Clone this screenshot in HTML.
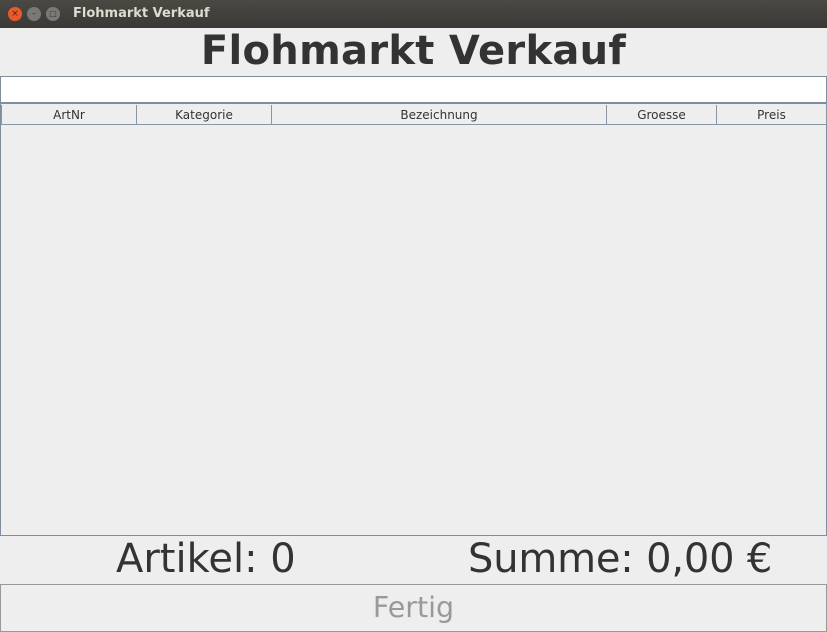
<!DOCTYPE html>
<html><head><meta charset="utf-8"><style>
*{margin:0;padding:0;box-sizing:border-box}
body{width:827px;height:632px;background:#eeeeee;font-family:"DejaVu Sans","Liberation Sans",sans-serif;position:relative;overflow:hidden;color:#333}
.tb{position:absolute;left:0;top:0;width:827px;height:28px;background:linear-gradient(#4a4944,#3a3935);}
.btn{position:absolute;top:7px;width:14px;height:14px;border-radius:50%;font-size:9px;line-height:14px;text-align:center;color:#3a3935}
.tt{position:absolute;left:73px;top:6px;color:#dfdbd2;font-weight:bold;font-size:13px}
.h1{position:absolute;left:0;width:827px;top:28px;text-align:center;font-weight:bold;font-size:40px;letter-spacing:0.3px;color:#333}
.tf{position:absolute;left:0;top:76px;width:827px;height:27px;background:#fff;border:1px solid #7f8e9e}
.tbl{position:absolute;left:0;top:103px;width:827px;height:433px;border:1px solid #7f8e9e;background:#eee}
.hd{position:absolute;top:1px;height:20px;border:1px solid #8a96a3;border-top:0;text-align:center;font-size:12px;line-height:21px;background:#eee;color:#333}
.big{position:absolute;top:536px;font-size:40px;color:#333}
.fb{position:absolute;left:0;top:584px;width:827px;height:48px;border:1px solid #999;text-align:center;font-size:28.5px;color:#999;line-height:46px}
</style></head><body>
<div class="tb">
<div class="btn" style="left:8px;background:#e9592b;color:#5a1d0c">×</div>
<div class="btn" style="left:27px;background:#7a7975">–</div>
<div class="btn" style="left:46px;background:#7a7975;font-size:8px">□</div>
<div class="tt">Flohmarkt Verkauf</div>
</div>
<div class="h1">Flohmarkt Verkauf</div>
<div class="tf"></div>
<div class="tbl">
<div class="hd" style="left:0;width:136px">ArtNr</div>
<div class="hd" style="left:135px;width:136px">Kategorie</div>
<div class="hd" style="left:270px;width:336px">Bezeichnung</div>
<div class="hd" style="left:605px;width:111px">Groesse</div>
<div class="hd" style="left:715px;width:111px">Preis</div>
</div>
<div class="big" style="left:116px">Artikel: 0</div>
<div class="big" style="left:468px;letter-spacing:-0.2px">Summe: 0,00 €</div>
<div class="fb">Fertig</div>
</body></html>
